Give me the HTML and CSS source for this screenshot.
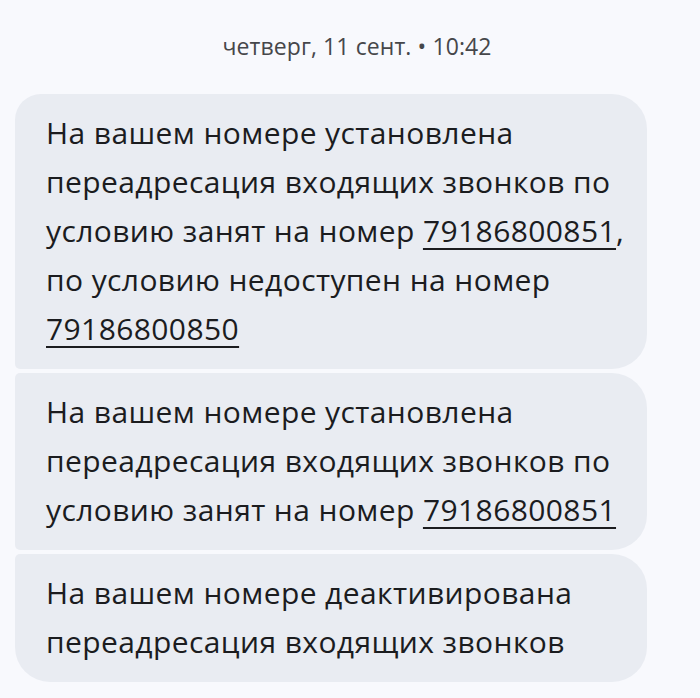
FILE: index.html
```html
<!DOCTYPE html>
<html lang="ru">
  <head>
    <meta charset="UTF-8" />
    <title>Сообщения</title>
    <link rel="stylesheet" href="styles.css">
  </head>
  <body>
    <main class="thread">
      <!-- Timestamp -->
      <div class="stamp">четверг, 11 сент. • 10:42</div>

      <!-- Message group -->
      <section class="group">
        <div class="bubble first">
          На вашем номере установлена переадресация входящих звонков по
          условию занят на номер <a href="tel:79186800851">79186800851</a>,
          по условию недоступен на номер
          <a href="tel:79186800850">79186800850</a>
        </div>
        <div class="bubble middle">
          На вашем номере установлена переадресация входящих звонков по
          условию занят на номер <a href="tel:79186800851">79186800851</a>
        </div>
        <div class="bubble last">
          На вашем номере деактивирована переадресация входящих звонков
        </div>
      </section>
    </main>
  </body>
</html>
```

FILE: styles.css
```css
/* Reset */
* {
  margin: 0;
  padding: 0;
  box-sizing: border-box;
}
body {
  background-color: #f8f9fd;
  color: #1b1c1f;
  font-family: "Open Sans", Roboto, sans-serif;
  min-height: 100vh;
  overflow: hidden;
}

/* Thread */
.thread {
  display: flex;
  flex-direction: column;
  padding: 32px 0 0 15px;
}
.stamp {
  text-align: center;
  font-size: 23px;
  letter-spacing: 0.1px;
  color: #46474a;
  margin-left: -15px;
  padding-left: 14px;
  line-height: 28px;
}

/* Bubbles */
.group {
  display: flex;
  flex-direction: column;
  gap: 4px;
  margin-top: 34px;
}
.bubble {
  width: 632px;
  background-color: #e9ecf2;
  padding: 14px 12px 16px 31px;
  font-size: 30px;
  letter-spacing: 0.4px;
  line-height: 49px;
  border-radius: 26px 35px 35px 5px;
}
.bubble.middle {
  border-radius: 5px 35px 35px 5px;
}
.bubble.last {
  border-radius: 5px 35px 35px 35px;
}
.bubble a {
  color: inherit;
  text-decoration: underline;
  text-decoration-thickness: 2px;
  text-underline-offset: 6px;
}
```
